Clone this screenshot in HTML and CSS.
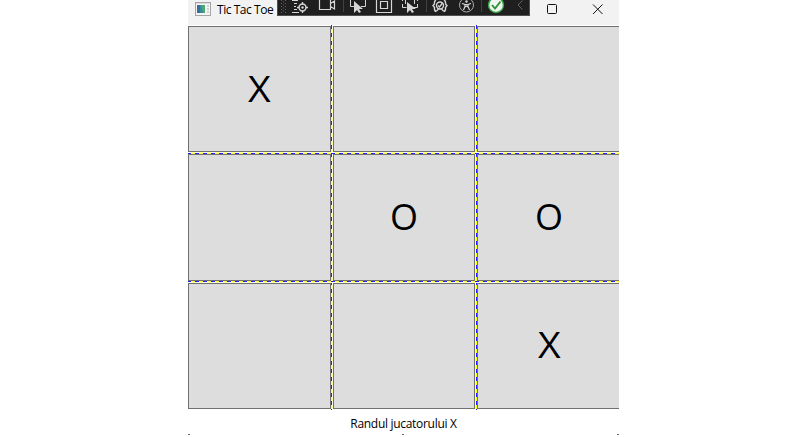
FILE: index.html
```html
<!DOCTYPE html>
<html lang="ro">
<head>
<meta charset="utf-8">
<title>Tic Tac Toe</title>
<link rel="stylesheet" href="styles.css">
</head>
<body>
<main class="window">
  <header class="titlebar">
    <svg class="app-icon" width="16" height="14" viewBox="0 0 16 14"><rect x=".5" y=".5" width="15" height="13" fill="#f5f5f5" stroke="#a5a5a5"/><path d="M1 1.5h14" stroke="#ddd"/><path d="M2 3h8v8H2z" fill="#3b8b92"/><path d="M2 3h3v8H2z" fill="#396aa0"/><path d="M6 3h4v8H8z" fill="#48a878"/><path d="M12 3h2v2h-2zM12 6h2v2h-2zM12 9h2v2h-2z" fill="#d2d2d2"/></svg>
    <h1 class="title">Tic Tac Toe</h1>
    <svg class="caption" width="60" height="20" viewBox="0 0 60 20" fill="none" stroke="#111"><rect x="1.5" y="4.5" width="9" height="9" rx="1"/><path d="M47 4.5l9.5 9.5M56.500 4.500L47 14"/></svg>
    <svg class="debugbar" width="253" height="16" viewBox="0 0 253 16" fill="none" stroke="#d6d6d6">
      <path d="M0 0h253v16H0z" fill="#1f1f1f" stroke="none"/>
      <path d="M0 15.500H252.500V0M.5 0v16" stroke="#514f50"/>
      <path d="M4.500 0v14M8.500 0v14" stroke="#626262" stroke-dasharray="1 2"/><path d="M6.500 1.500v12" stroke="#626262" stroke-dasharray="1 2"/>
      <path d="M15 .5h6M17 3.500h3M17 6.500h2M17 9.500h3M15 12.500h7" stroke-width="1.200"/>
      <circle cx="25.500" cy="7.500" r="3.500" stroke-width="1.400"/><circle cx="25.500" cy="7.500" r="1.200" fill="#d6d6d6" stroke="none"/><path d="M25.500 2v2.500M25.500 10.500V13M20 7.500h2.500M28.500 7.500H31" stroke-width="1.300"/>
      <path d="M42.500 0v9.500h11V0M53.500 3.500L57.500 1v8l-4-2.500" stroke-width="1.200"/>
      <path d="M66.500 0v12M149.500 0v12M204.500 0v12" stroke="#414141"/>
      <path d="M73.500 0v6.500h4M84 6.500h4.500V0"/><path d="M77 1v12l3-3 2 3 2-1-2-3h4z" fill="#d6d6d6" stroke="none"/>
      <path d="M99.500 0v12.500h15V0M103.500 1.500h7v7h-7z" stroke-width="1.200"/>
      <path d="M125.500 0v1M125.500 4v3.500h4M136 7.500h4.500V4M140.500 0v1M128.500 0v4M137.500 0v4"/><path d="M130 2v11l3-3 2 3 2-1-2-3h4z" fill="#d6d6d6" stroke="none"/>
      <path d="M159 0q-2 1-1.500 4l-1.500 1.500 1.500 2q-.5 3.500 2 4M167 0q2 1 1.500 4l1.500 1.500-1.500 2q.5 3.500-2 4" stroke-width="1.400"/><circle cx="163" cy="5.500" r="3.500" stroke-width="1.400"/><path d="M161 5.500l1.500 1.500 3-4M159.500 11l2-2M166.500 11l-2-2" stroke-width="1.300"/>
      <circle cx="189.500" cy="5" r="7" stroke="#aaa"/><circle cx="189.500" cy="1.500" r="1.200" fill="#d6d6d6" stroke="none"/><path d="M185 3.500l3 1v2L186.500 10M194 3.500l-3 1v2l1.500 3.500M188 4.500h3M188 7l1.500-1L191 7" stroke-width="1.200"/>
      <circle cx="219" cy="5" r="7.500" fill="#f0f5ef" stroke="#35a345" stroke-width="1.400"/><path d="M215 5l3 3.500 5.500-7" stroke="#299536" stroke-width="1.900"/>
      <path d="M245.500 0.500L241 5l4.500 4.500" stroke="#666"/>
    </svg>
  </header>
  <section class="board">
    <button class="cell"><span class="mark cross">X</span></button><button class="cell"></button><button class="cell"></button>
    <button class="cell"></button><button class="cell"><span class="mark raised">O</span></button><button class="cell"><span class="mark raised">O</span></button>
    <button class="cell"></button><button class="cell"></button><button class="cell"><span class="mark cross raised">X</span></button>
    <i class="vline first"></i><i class="vline second"></i>
    <i class="hline first"></i><i class="hline second"></i>
  </section>
  <footer class="status">Randul jucatorului X<i class="edge left"></i><i class="edge middle"></i><i class="edge right"></i></footer>
</main>
</body>
</html>
```
FILE: styles.css
```css
* { box-sizing: border-box; }
body { margin: 0; background: #fff; font-family: "Open Sans", "Noto Sans", sans-serif; overflow: hidden; }
.window { width: 431px; height: 437px; margin-left: 188px; overflow: hidden; color: #000; }
.titlebar { position: relative; height: 25px; background: #f2f2f2; display: flex; align-items: flex-start; }
.app-icon { margin: 2px 0 0 7px; }
.title { margin: 1px 0 0 6px; font-size: 12px; line-height: 17px; font-weight: 400; letter-spacing: -.45px; white-space: nowrap; width: 58px; }
.caption { margin-left: auto; margin-right: 13px; }
.debugbar { position: absolute; left: 89px; top: 0; }
.board { position: relative; margin-top: 1px; width: 433px; height: 383px; display: grid; grid-template-columns: 143px 142px 144px; grid-template-rows: 126px 127px 126px; column-gap: 2px; row-gap: 2px; }
.cell { margin: 0; padding: 0; border: 1px solid #707070; border-radius: 0; background: #ddd; color: #000; font: 36px/1 "Open Sans", "Noto Sans", sans-serif; }
.mark { display: inline-block; }
.cross { transform: scaleX(1.09); }
.raised { margin-bottom: 2px; }
.vline { position: absolute; width: 2px; top: -1px; height: 385px; }
.vline.first { left: 143px; background: repeating-linear-gradient(#22f 0 4px, #ff4 4px 8px) 0 0 / 1px 100% no-repeat, repeating-linear-gradient(#fff 0 4px, #ffffa0 4px 8px); }
.vline.second { left: 287px; background: repeating-linear-gradient(#22f 0 4px, #ff0 4px 8px) 1px 0 / 1px 100% no-repeat, repeating-linear-gradient(#fff 0 4px, #ffffa0 4px 8px); }
.hline { position: absolute; left: -1px; width: 432px; height: 2px; }
.hline.first { top: 126px; background: repeating-linear-gradient(90deg, #22f 0 4px, #ff4 4px 8px) 0 1px / 100% 1px no-repeat, repeating-linear-gradient(90deg, #fff 0 4px, #ffffa0 4px 8px); }
.hline.second { top: 255px; background: repeating-linear-gradient(90deg, #22f 0 4px, #ff4 4px 8px) 0 0 / 100% 1px no-repeat, repeating-linear-gradient(90deg, #fff 0 4px, #ffffa0 4px 8px); }
.status { position: relative; height: 28px; padding-top: 6px; text-align: center; font-size: 12px; line-height: 17px; letter-spacing: -.3px; }
.edge { position: absolute; bottom: 2px; width: 2px; height: 1px; background: #666; }
.left { left: 0; }
.middle { left: 214px; }
.right { right: 0; }
```
